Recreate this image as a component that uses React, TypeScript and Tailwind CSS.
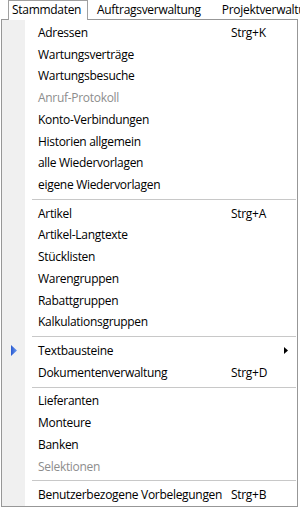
import React from "react";

type Item =
  | { sep: true }
  | { label: string; shortcut?: string; disabled?: boolean; sub?: boolean; icon?: boolean; sep?: false };

const items: Item[] = [
  { label: "Adressen", shortcut: "Strg+K" },
  { label: "Wartungsverträge" },
  { label: "Wartungsbesuche" },
  { label: "Anruf-Protokoll", disabled: true },
  { label: "Konto-Verbindungen" },
  { label: "Historien allgemein" },
  { label: "alle Wiedervorlagen" },
  { label: "eigene Wiedervorlagen" },
  { sep: true },
  { label: "Artikel", shortcut: "Strg+A" },
  { label: "Artikel-Langtexte" },
  { label: "Stücklisten" },
  { label: "Warengruppen" },
  { label: "Rabattgruppen" },
  { label: "Kalkulationsgruppen" },
  { sep: true },
  { label: "Textbausteine", sub: true, icon: true },
  { label: "Dokumentenverwaltung", shortcut: "Strg+D" },
  { sep: true },
  { label: "Lieferanten" },
  { label: "Monteure" },
  { label: "Banken" },
  { label: "Selektionen", disabled: true },
  { sep: true },
  { label: "Benutzerbezogene Vorbelegungen", shortcut: "Strg+B" },
];

export default function App() {
  return (
    <div
      className="w-[300px] h-[508px] bg-white overflow-hidden text-[12px] tracking-[-0.3px] text-black"
      style={{ fontFamily: '"Open Sans", "Noto Sans", sans-serif' }}
    >
      {/* menu bar */}
      <div className="h-[19px] flex items-stretch relative z-10 whitespace-nowrap">
        <div className="ml-[8px] w-[80px] h-[20px] shrink-0 border border-b-0 border-[#a0a0a0] bg-white pl-[3px] leading-[18px]">
          Stammdaten
        </div>
        <div className="ml-[9px] shrink-0 leading-[19px]">Auftragsverwaltung</div>
        <div className="ml-[21px] shrink-0 leading-[19px]">Projektverwaltung</div>
      </div>
      {/* dropdown */}
      <div className="ml-[1px] w-[297px] h-[488px] border border-[#979797] flex">
        <div className="w-[24px] bg-[#f0f0f0] border-r border-white flex flex-col pt-[2px]">
          {items.map((it, i) =>
            "label" in it && it.label ? (
              <div key={i} className="h-[22px] flex items-center pl-[9px]">
                {it.icon && (
                  <svg width="6" height="11" viewBox="0 0 6 11">
                    <defs>
                      <linearGradient id="bt" x1="0" y1="0" x2="1" y2="0">
                        <stop offset="0" stopColor="#2a5ad0" />
                        <stop offset="1" stopColor="#6a9af0" />
                      </linearGradient>
                    </defs>
                    <path d="M0 0 L6 5.5 L0 11 Z" fill="url(#bt)" />
                  </svg>
                )}
              </div>
            ) : (
              <div key={i} className="h-[7px]" />
            )
          )}
        </div>
        <div className="flex-1 flex flex-col pt-[2px]">
          {items.map((it, i) =>
            "label" in it && it.label ? (
              <div
                key={i}
                className={`h-[22px] flex items-center pl-[12px] ${it.disabled ? "text-[#8d8d8d]" : ""}`}
              >
                <div className="w-[193px] whitespace-nowrap">{it.label}</div>
                <div className="flex-1 whitespace-nowrap">{it.shortcut ?? ""}</div>
                {it.sub && (
                  <svg width="4" height="7" viewBox="0 0 4 7" className="mr-[9px]">
                    <path d="M0 0 L4 3.5 L0 7 Z" fill="#000" />
                  </svg>
                )}
              </div>
            ) : (
              <div key={i} className="h-[7px] flex items-center pl-[6px] pr-[1px]">
                <div className="h-px w-full bg-[#c8c8c8]" />
              </div>
            )
          )}
        </div>
      </div>
    </div>
  );
}
